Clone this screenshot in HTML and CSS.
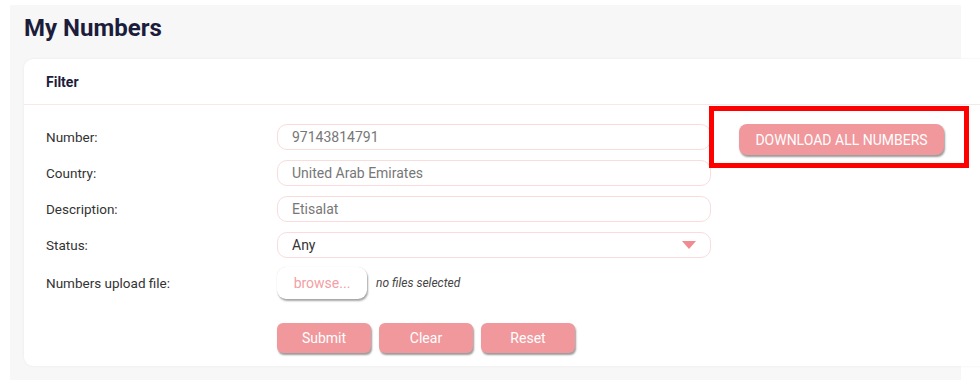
FILE: index.html
```html
<!DOCTYPE html>
<html lang="en">
<head>
    <meta charset="UTF-8">
    <meta name="viewport" content="width=device-width, initial-scale=1.0">
    <title>My Numbers</title>
    <link rel="stylesheet" href="styles.css">
</head>
<body>
    <div class="page">
        <h1 class="page-title">My Numbers</h1>

        <!-- Filter card -->
        <div class="card">
            <div class="card-header">Filter</div>
            <div class="card-body">
                <div class="filter-form">
                    <div class="form-row">
                        <label class="form-label">Number:</label>
                        <input class="form-input" type="text" value="97143814791">
                    </div>
                    <div class="form-row">
                        <label class="form-label">Country:</label>
                        <input class="form-input" type="text" value="United Arab Emirates">
                    </div>
                    <div class="form-row">
                        <label class="form-label">Description:</label>
                        <input class="form-input" type="text" value="Etisalat">
                    </div>
                    <div class="form-row">
                        <label class="form-label">Status:</label>
                        <div class="form-select">
                            <span>Any</span>
                            <span class="select-arrow"></span>
                        </div>
                    </div>
                    <div class="form-row file-row">
                        <label class="form-label">Numbers upload file:</label>
                        <div class="file-field">
                            <button class="browse-btn" type="button">browse...</button>
                            <span class="file-name">no files selected</span>
                        </div>
                    </div>
                    <div class="form-actions">
                        <button class="btn" type="button">Submit</button>
                        <button class="btn" type="button">Clear</button>
                        <button class="btn" type="button">Reset</button>
                    </div>
                </div>

                <!-- Download all -->
                <div class="download-box">
                    <button class="btn btn-download" type="button">DOWNLOAD ALL NUMBERS</button>
                </div>
            </div>
        </div>
    </div>
</body>
</html>
```

FILE: styles.css
```css
/* General Reset */
body {
    margin: 0;
    padding: 0;
    background-color: #fff;
    font-family: Roboto, "Liberation Sans", sans-serif;
    color: #333;
}

.page {
    margin: 5px 19px 0 10px;
    padding: 7px 0 14px 14px;
    background-color: #f7f7f7;
}

.page-title {
    margin: 0 0 15px 0;
    font-size: 24px;
    line-height: 32px;
    font-weight: 700;
    color: #1c1d3b;
}

/* Card */
.card {
    margin-right: -40px;
    background-color: #fff;
    border-radius: 9px 0 0 9px;
    box-shadow: 0 0 3px rgba(0, 0, 0, 0.06);
}

.card-header {
    height: 45px;
    line-height: 46px;
    padding-left: 22px;
    font-size: 14px;
    font-weight: 700;
    color: #1c1d3b;
    border-bottom: 1px solid #fbe6e6;
}

.card-body {
    display: flex;
    padding: 19px 0 13px 22px;
}

.filter-form {
    display: flex;
    flex-direction: column;
    gap: 10px;
}

.form-row {
    display: flex;
    align-items: center;
}

.form-label {
    width: 231px;
    font-size: 13.5px;
    color: #333;
}

.form-input,
.form-select {
    box-sizing: border-box;
    width: 434px;
    height: 26px;
    padding: 0 14px;
    border: 1px solid #fadcdc;
    border-radius: 10px;
    background: #fff;
    font-family: Roboto, "Liberation Sans", sans-serif;
    font-size: 14px;
    color: #777;
    outline: none;
}

.form-select {
    display: flex;
    align-items: center;
    justify-content: space-between;
    color: #333;
}

.select-arrow {
    width: 0;
    height: 0;
    border-left: 7px solid transparent;
    border-right: 7px solid transparent;
    border-top: 8px solid #f08b91;
}

.file-row {
    margin-top: -1px;
}

.file-field {
    display: flex;
    align-items: center;
}

.browse-btn {
    width: 90px;
    height: 32px;
    border: none;
    border-radius: 9px;
    background: #fff;
    box-shadow: 1px 2px 2px rgba(0, 0, 0, 0.35), 0 0 1px rgba(0, 0, 0, 0.15);
    font-family: Roboto, "Liberation Sans", sans-serif;
    font-size: 14px;
    color: #f2a0a4;
}

.file-name {
    margin-left: 9px;
    font-size: 12px;
    font-style: italic;
    color: #444;
}

.form-actions {
    display: flex;
    gap: 8px;
    margin-top: 14px;
    padding-left: 231px;
}

.btn {
    width: 94px;
    height: 30px;
    border: none;
    border-radius: 6px;
    background-color: #f0989c;
    box-shadow: 1px 2px 2px rgba(0, 0, 0, 0.4);
    font-family: Roboto, "Liberation Sans", sans-serif;
    font-size: 14px;
    color: #fff;
}

/* Download button in red box */
.download-box {
    box-sizing: border-box;
    width: 260px;
    height: 62px;
    margin: -18px 0 0 -2px;
    padding: 13px 0 0 25px;
    border: 5px solid #ff0000;
}

.btn-download {
    width: 205px;
    height: 31px;
    border-radius: 8px;
    font-size: 14px;
}
```
